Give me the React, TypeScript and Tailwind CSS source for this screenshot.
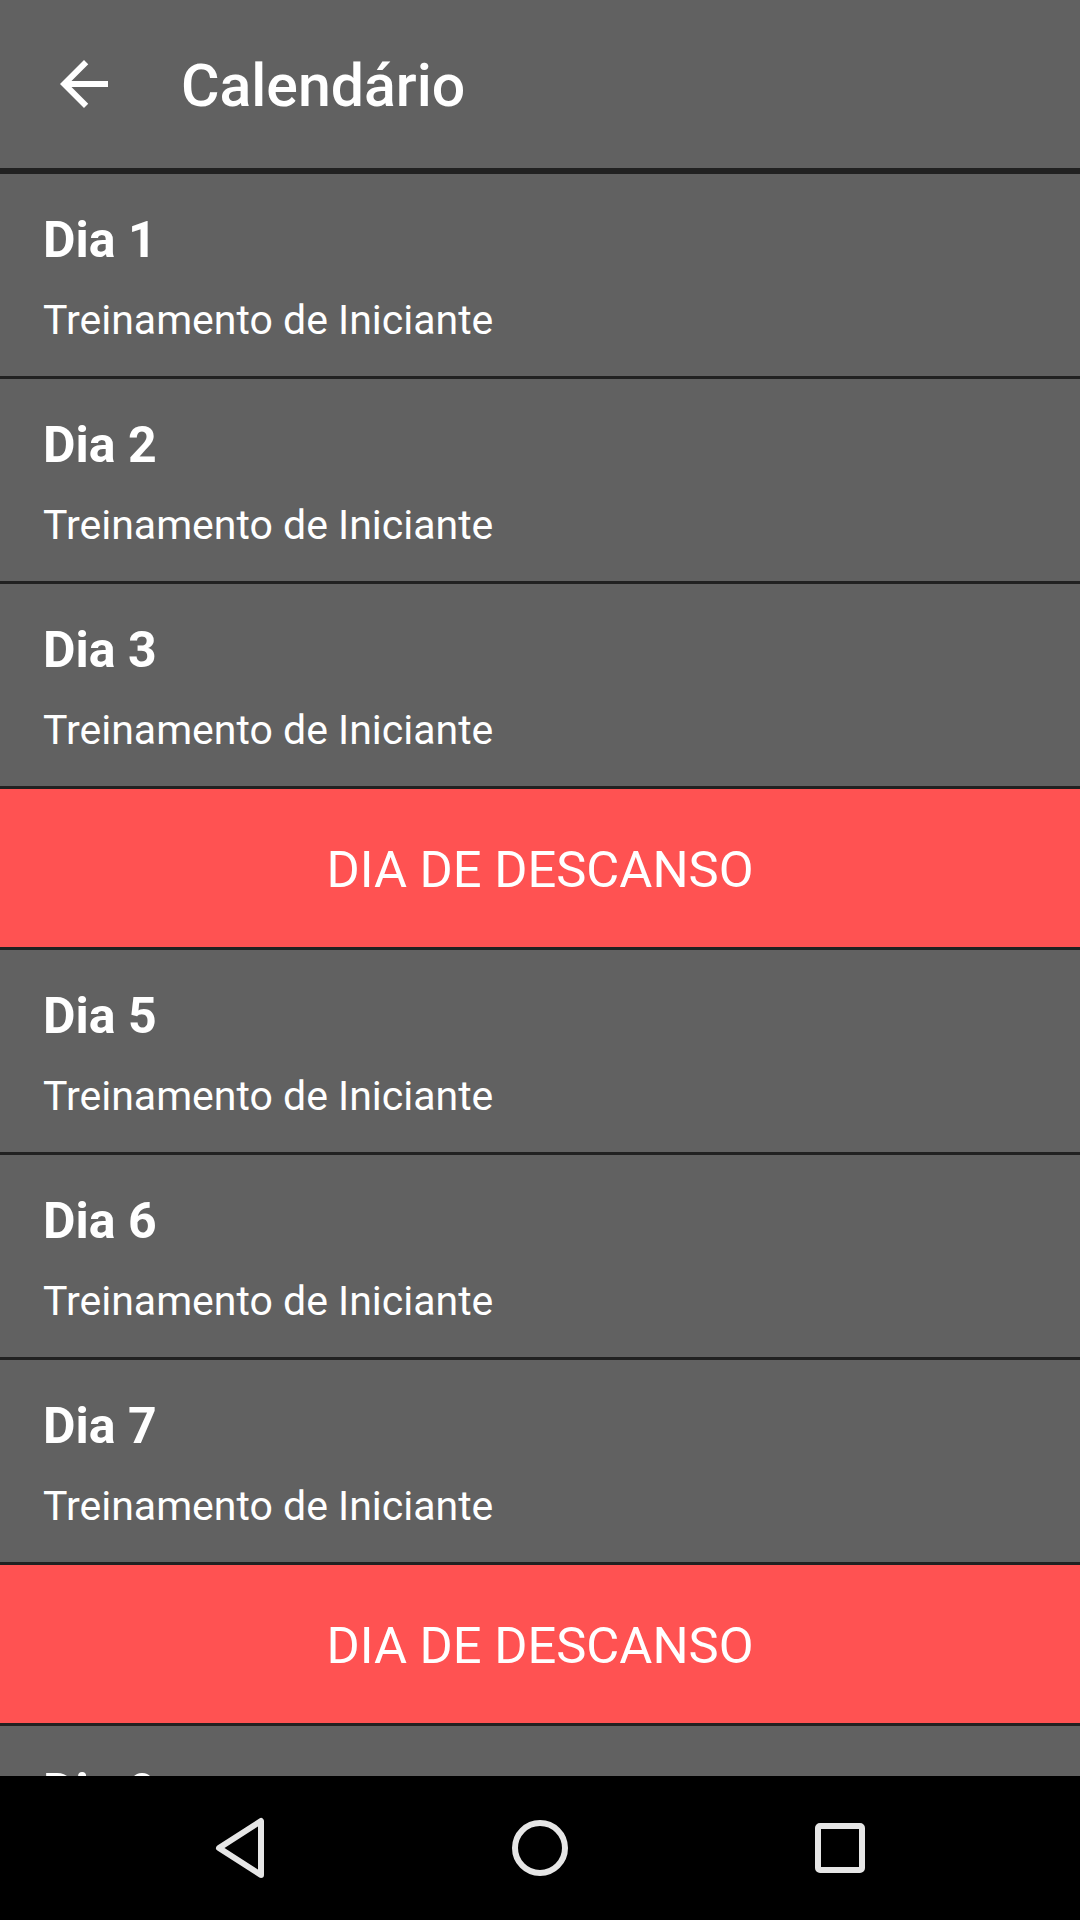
import React from "react";

type Row = { kind: "day"; label: string } | { kind: "rest" };

const rows: Row[] = [
  { kind: "day", label: "Dia 1" },
  { kind: "day", label: "Dia 2" },
  { kind: "day", label: "Dia 3" },
  { kind: "rest" },
  { kind: "day", label: "Dia 5" },
  { kind: "day", label: "Dia 6" },
  { kind: "day", label: "Dia 7" },
  { kind: "rest" },
  { kind: "day", label: "Dia 9" },
];

function DayRow({ label }: { label: string }) {
  return (
    <div className="h-[205px] shrink-0 bg-[#616161] pl-[43px] pt-[37px] border-b-[3px] border-[#212121]">
      <div className="text-[50px] leading-[58px] font-bold text-white">{label}</div>
      <div className="mt-[28px] text-[41px] leading-[47px] text-white">Treinamento de Iniciante</div>
    </div>
  );
}

function RestRow() {
  return (
    <div className="h-[161px] shrink-0 bg-[#ff5252] flex items-center justify-center pt-[4px] border-b-[3px] border-[#212121]">
      <span className="text-[50.7px] text-white">DIA DE DESCANSO</span>
    </div>
  );
}

export default function App() {
  return (
    <div className="w-[1080px] h-[1920px] flex flex-col overflow-hidden bg-[#616161]" style={{ fontFamily: "Roboto, 'Noto Sans', sans-serif" }}>
      {/* Toolbar */}
      <header className="h-[174px] shrink-0 bg-[#616161] flex items-center border-b-[6px] border-[#212121]">
        <svg className="ml-[48px] w-[72px] h-[72px]" viewBox="0 0 24 24" fill="#ffffff">
          <path d="M20 11H7.83l5.59-5.59L12 4l-8 8 8 8 1.41-1.41L7.83 13H20v-2z" />
        </svg>
        <h1 className="ml-[61px] pt-[5px] text-[59px] font-medium text-white">Calendário</h1>
      </header>

      {/* List */}
      <div className="flex-1 min-h-0 overflow-hidden flex flex-col">
        {rows.map((r, i) =>
          r.kind === "day" ? <DayRow key={i} label={r.label} /> : <RestRow key={i} />
        )}
      </div>

      {/* Navigation bar */}
      <nav className="h-[144px] shrink-0 bg-black flex items-center justify-center gap-[200px]">
        <div className="w-[100px] flex justify-center">
          <svg className="w-[60px] h-[64px]" viewBox="0 0 60 64" fill="none" stroke="#e6e6e6" strokeWidth="6" strokeLinejoin="round">
            <path d="M51 5 L51 59 L9 32 Z" />
          </svg>
        </div>
        <div className="w-[100px] flex justify-center">
          <svg className="w-[60px] h-[60px]" viewBox="0 0 60 60" fill="none" stroke="#e6e6e6" strokeWidth="6">
            <circle cx="30" cy="30" r="25" />
          </svg>
        </div>
        <div className="w-[100px] flex justify-center">
          <svg className="w-[56px] h-[56px]" viewBox="0 0 56 56" fill="none" stroke="#e6e6e6" strokeWidth="6" strokeLinejoin="round">
            <rect x="6" y="6" width="44" height="44" rx="2" />
          </svg>
        </div>
      </nav>
    </div>
  );
}
